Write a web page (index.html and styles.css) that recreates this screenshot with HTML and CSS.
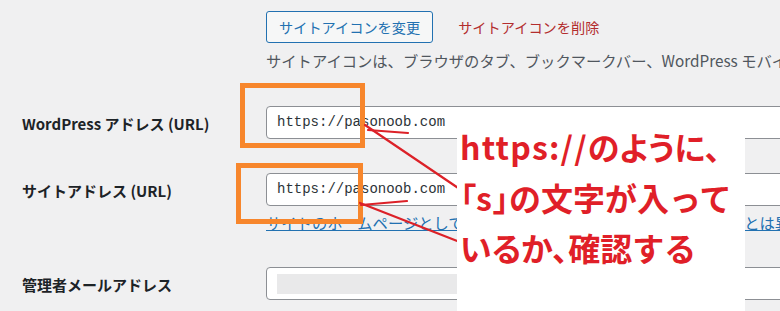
FILE: index.html
```html
<!DOCTYPE html>
<html lang="ja">
<head>
<meta charset="utf-8">
<title>一般設定</title>
<link rel="stylesheet" href="styles.css">
</head>
<body>
<div class="page">
  <div class="form">
    <div class="label"></div>
    <div class="cell icon-cell">
      <div class="icon-actions">
        <button class="btn">サイトアイコンを変更</button>
        <a class="remove">サイトアイコンを削除</a>
      </div>
      <p class="desc">サイトアイコンは、ブラウザのタブ、ブックマークバー、WordPress モバイルアプリで表示されます。</p>
    </div>

    <div class="label row-wp">WordPress アドレス (URL)</div>
    <div class="cell row-wp">
      <div class="field">https://pasonoob.com</div>
    </div>

    <div class="label row-site">サイトアドレス (URL)</div>
    <div class="cell row-site">
      <div class="field">https://pasonoob.com</div>
      <p class="link-line"><a class="link">サイトのホームページとして WordPress のインストールディレクトリとは異なる場所を設定する場合は、ここにアドレスを入力してください。</a></p>
    </div>

    <div class="label row-mail">管理者メールアドレス</div>
    <div class="cell row-mail">
      <div class="field"><span class="blur"></span></div>
      <p class="desc desc-low">このアドレスは管理のために使われます。変更した場合、確認のため新しいアドレスにメールを送信します。</p>
    </div>
  </div>

  <svg class="marks" width="780" height="311" viewBox="0 0 780 311">
    <g fill="none" stroke="#f7862c" stroke-width="5">
      <rect x="242.5" y="85.5" width="120" height="60"/>
      <rect x="238.5" y="165.5" width="122" height="56"/>
    </g>
    <g fill="none" stroke="#dc2128" stroke-width="2.2" stroke-linecap="round">
      <line x1="365" y1="125" x2="470" y2="196"/>
      <line x1="368" y1="130" x2="408" y2="133"/>
      <line x1="360" y1="203" x2="470" y2="246"/>
      <line x1="361" y1="205" x2="407" y2="201"/>
    </g>
  </svg>

  <div class="note">
    <p class="note-line"><span class="latin">https://</span><span class="palt">のように、</span></p>
    <p class="note-line"><span class="palt">「</span><span class="latin">s</span><span class="palt">」</span>の文字が入って</p>
    <p class="note-line"><span class="palt">いるか、</span>確認する</p>
  </div>
</div>
</body>
</html>
```

FILE: styles.css
```css
html, body {
  margin: 0;
  padding: 0;
  width: 780px;
  height: 311px;
  overflow: hidden;
  background: #f0f0f1;
}

.page {
  position: relative;
  width: 780px;
  height: 311px;
  overflow: hidden;
  font-family: "Noto Sans CJK JP", "Noto Sans", sans-serif;
  color: #1d2327;
}

.form {
  display: grid;
  grid-template-columns: 244px 1200px;
  padding-left: 22px;
  padding-top: 11px;
}

.label {
  font-size: 15px;
  font-weight: 700;
  line-height: 20px;
  color: #1d2327;
  white-space: nowrap;
}

.cell {
  white-space: nowrap;
}

.icon-actions {
  display: flex;
  align-items: center;
  gap: 25px;
}

.btn {
  box-sizing: border-box;
  height: 32px;
  padding: 0 12px;
  border: 1px solid #2271b1;
  border-radius: 3px;
  background: #f6f7f7;
  color: #2271b1;
  font-family: "Noto Sans CJK JP", sans-serif;
  font-size: 14.2px;
  line-height: 30px;
}

.remove {
  color: #b32d2e;
  font-size: 14.2px;
  line-height: 20px;
}

.desc {
  margin: 7px 0 0;
  font-size: 15.3px;
  line-height: 20px;
  color: #50575e;
}

.desc-low {
  margin-top: 9px;
}

.row-wp { margin-top: 36px; }
.row-site { margin-top: 34px; }
.row-mail { margin-top: 35px; }

.label.row-wp, .label.row-site, .label.row-mail {
  padding-top: 8px;
}

.field {
  box-sizing: border-box;
  width: 640px;
  height: 33px;
  padding: 0 10px;
  border: 1px solid #8c8f94;
  border-radius: 4px;
  background: #fff;
  font-family: "Liberation Mono", "DejaVu Sans Mono", monospace;
  font-size: 14px;
  line-height: 31px;
  color: #2c3338;
  display: flex;
  align-items: center;
}

.blur {
  display: block;
  width: 400px;
  height: 20px;
  background: #e9e9ea;
}

.link-line {
  margin: 6px 0 0;
  font-size: 15.3px;
  line-height: 20px;
}

.link {
  color: #2271b1;
  text-decoration: underline;
}

.marks {
  position: absolute;
  left: 0;
  top: 0;
}

.note {
  position: absolute;
  left: 457px;
  top: 110px;
  width: 288px;
  bottom: 0;
  background: #fff;
  padding: 11px 0 0 3px;
  box-sizing: border-box;
}

.note-line {
  margin: 0;
  font-family: "Noto Sans CJK JP", sans-serif;
  font-size: 32px;
  font-weight: 700;
  line-height: 50.5px;
  color: #e01f28;
  white-space: nowrap;
}

.latin {
  letter-spacing: 1.2px;
}

.palt {
  font-feature-settings: "palt";
}
```
